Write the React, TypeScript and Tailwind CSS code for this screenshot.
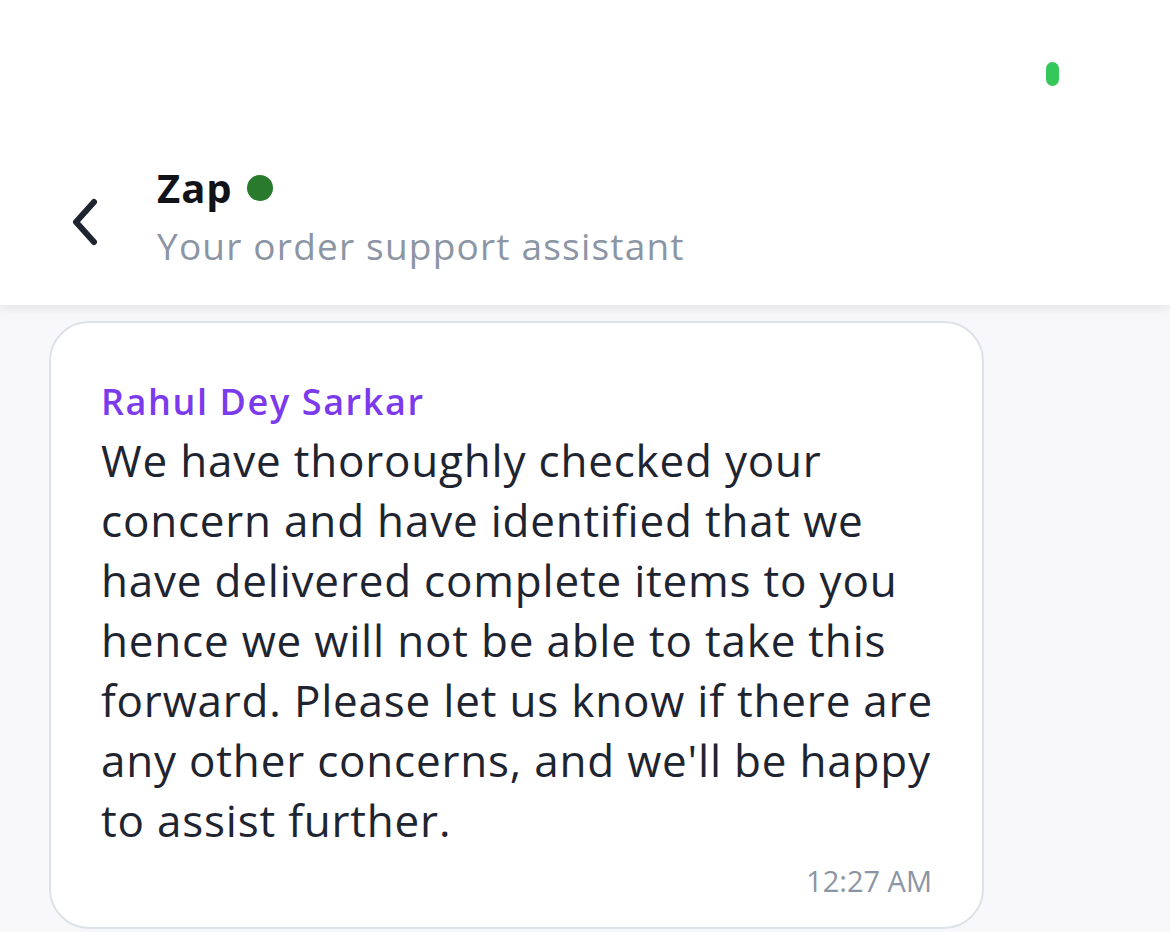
import React from 'react';

export default function App() {
  return (
    <div
      className="w-[1170px] h-[932px] overflow-hidden bg-[#f8f8fb] flex flex-col"
      style={{ fontFamily: '"Open Sans", "Noto Sans", sans-serif' }}
    >
      {/* Header */}
      <div className="relative bg-white h-[305px] shrink-0 shadow-[0_4px_10px_rgba(0,0,0,0.08)] z-10 flex flex-col">
        <div className="h-[160px] flex justify-end pr-[111px] pt-[62px]">
          <div className="w-[13px] h-[24px] rounded-full bg-[#34c759]" />
        </div>
        <div className="flex items-center pl-[68px]">
          <svg width="34" height="48" viewBox="0 0 34 48" className="mr-[55px] mt-[8px]">
            <path
              d="M26 4 L8 24 L26 44"
              fill="none"
              stroke="#1f2530"
              strokeWidth="6"
              strokeLinecap="round"
              strokeLinejoin="round"
            />
          </svg>
          <div className="flex flex-col">
            <div className="flex items-center gap-[14px] h-[56px]">
              <span className="text-[40px] font-bold text-[#111318] leading-none tracking-[1px]">Zap</span>
              <span className="w-[26px] h-[26px] rounded-full bg-[#2a7a2e]" />
            </div>
            <div className="text-[37px] text-[#8c95a4] leading-[60px] tracking-[1.2px]">Your order support assistant</div>
          </div>
        </div>
      </div>

      {/* Chat */}
      <div className="pl-[49px] pt-[16px]">
        <div className="w-[935px] bg-white border-2 border-[#dde2e8] rounded-[40px] pl-[50px] pr-[40px] pt-[54px] pb-[32px]">
          <div className="text-[36px] font-semibold text-[#7c3aed] leading-[50px] tracking-[1.6px]">Rahul Dey Sarkar</div>
          <p className="text-[44px] text-[#1e2430] leading-[60px] mt-[3px] tracking-[0.8px]">
            We have thoroughly checked your concern and have identified that we have delivered complete items to you
            hence we will not be able to take this forward. Please let us know if there are any other concerns, and
            we'll be happy to assist further.
          </p>
          <div className="text-right text-[29px] text-[#8c95a4] leading-none mt-[16px] pr-[10px]">12:27 AM</div>
        </div>
      </div>
    </div>
  );
}
